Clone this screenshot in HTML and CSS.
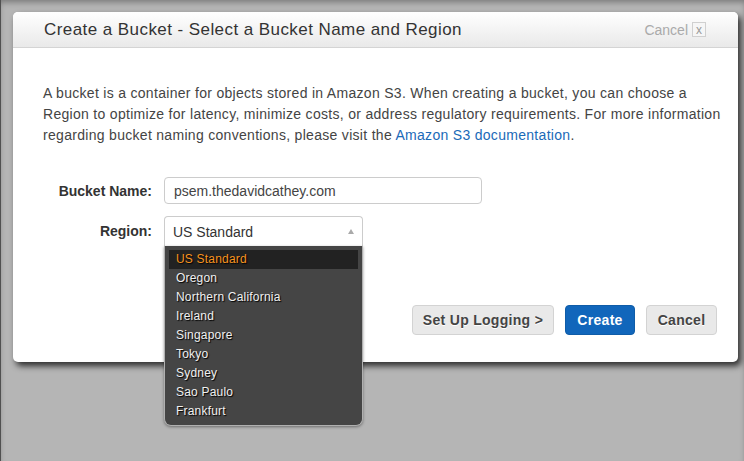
FILE: index.html
```html
<!DOCTYPE html>
<html>
<head>
<meta charset="utf-8">
<link rel="stylesheet" href="styles.css">
</head>
<body>
<div class="page">
  <div class="dialog">
    <div class="dialog-header">
      <h1 class="title">Create a Bucket - Select a Bucket Name and Region</h1>
      <div class="close">Cancel <span class="close-x">x</span></div>
    </div>
    <div class="dialog-body">
      <p class="intro">A bucket is a container for objects stored in Amazon S3. When creating a bucket, you can choose a Region to optimize for latency, minimize costs, or address regulatory requirements. For more information regarding bucket naming conventions, please visit the <a class="link" href="#">Amazon S3 documentation</a>.</p>
      <div class="form">
        <label class="label">Bucket Name:</label>
        <div class="input">psem.thedavidcathey.com</div>
        <label class="label">Region:</label>
        <div class="select-wrap">
          <div class="select">
            <span>US Standard</span>
            <span class="arrow"></span>
          </div>
          <ul class="menu">
            <li class="item active">US Standard</li>
            <li class="item">Oregon</li>
            <li class="item">Northern California</li>
            <li class="item">Ireland</li>
            <li class="item">Singapore</li>
            <li class="item">Tokyo</li>
            <li class="item">Sydney</li>
            <li class="item">Sao Paulo</li>
            <li class="item">Frankfurt</li>
          </ul>
        </div>
      </div>
      <div class="actions">
        <button class="btn btn-logging">Set Up Logging &gt;</button>
        <button class="btn btn-primary">Create</button>
        <button class="btn btn-cancel">Cancel</button>
      </div>
    </div>
  </div>
</div>
</body>
</html>
```
FILE: styles.css
```css
html, body {
  margin: 0;
  padding: 0;
}
body {
  background: #b5b5b5;
  font-family: "Liberation Sans", Arial, sans-serif;
  width: 744px;
  height: 461px;
  overflow: hidden;
}
.page {
  height: 461px;
  box-sizing: border-box;
  border-left: 1px solid #505050;
  padding: 12px 0 0 12px;
  box-shadow: inset 0 4px 6px -2px rgba(0,0,0,0.35);
}
.dialog {
  width: 725px;
  height: 350px;
  background: #fff;
  border-radius: 5px;
  box-shadow: 3px 4px 6px rgba(0,0,0,0.75);
}
.dialog-header {
  height: 35px;
  border-bottom: 1px solid #d4d4d4;
  border-radius: 5px 5px 0 0;
  background: linear-gradient(#ffffff, #e9e9e9);
  display: flex;
  align-items: center;
  justify-content: space-between;
  padding: 0 32px 0 31px;
}
.title {
  margin: 0;
  font-size: 17px;
  font-weight: normal;
  color: #333;
  letter-spacing: 0.43px;
}
.close {
  font-size: 14px;
  color: #aaa;
  display: flex;
  align-items: center;
  gap: 4px;
}
.close-x {
  display: inline-flex;
  align-items: center;
  justify-content: center;
  width: 12px;
  height: 13px;
  border: 1px solid #d0d0d0;
  font-size: 12px;
  color: #999;
  line-height: 1;
  background: #f6f6f6;
}
.dialog-body {
  padding: 0 21px 0 30px;
}
.intro {
  margin: 35px -15px 0 0;
  font-size: 14px;
  line-height: 21px;
  color: #444;
  letter-spacing: 0.3px;
}
.link {
  color: #1a6ab8;
  text-decoration: none;
}
.form {
  display: grid;
  grid-template-columns: 109px 318px;
  column-gap: 12px;
  row-gap: 12px;
  align-items: center;
  margin-top: 31px;
}
.label {
  text-align: right;
  font-size: 14px;
  font-weight: bold;
  color: #333;
}
.input {
  height: 25px;
  border: 1px solid #ccc;
  border-radius: 4px;
  font-size: 14px;
  color: #444;
  display: flex;
  align-items: center;
  padding-left: 9px;
}
.select-wrap {
  position: relative;
  width: 199px;
}
.select {
  height: 30px;
  box-sizing: border-box;
  border: 1px solid #ccc;
  border-bottom: none;
  border-radius: 4px 4px 0 0;
  font-size: 14px;
  color: #333;
  display: flex;
  align-items: center;
  justify-content: space-between;
  padding: 0 8px 0 8px;
}
.arrow {
  width: 0;
  height: 0;
  border-left: 3px solid transparent;
  border-right: 3px solid transparent;
  border-bottom: 5px solid #aaa;
}
.menu {
  position: absolute;
  top: 30px;
  left: 0;
  width: 199px;
  box-sizing: border-box;
  margin: 0;
  list-style: none;
  padding: 4px 4px 4px 4px;
  background: #454545;
  border: 1px solid #b0b0b0;
  border-top: none;
  border-radius: 0 0 7px 7px;
  height: 180px;
  box-shadow: 0 1px 3px rgba(0,0,0,0.4);
}
.item {
  height: 19px;
  line-height: 18px;
  font-size: 12px;
  color: #f0f0f0;
  padding-left: 7px;
  letter-spacing: 0.2px;
  text-shadow: 1px 1px 1px #000;
}
.item.active {
  background: #222;
  color: #f7931e;
}
.actions {
  display: flex;
  justify-content: flex-end;
  gap: 11px;
  margin-top: 59px;
}
.btn {
  height: 30px;
  font-family: "Liberation Sans", Arial, sans-serif;
  font-size: 14px;
  font-weight: bold;
  border-radius: 4px;
  border: 1px solid #d3d3d3;
  background: #e9e9e9;
  color: #444;
  letter-spacing: 0.3px;
  padding: 0;
  text-shadow: 0 1px 0 #fff;
}
.btn-logging { width: 142px; }
.btn-cancel { width: 71px; }
.btn-primary {
  width: 70px;
  background: #1166bb;
  border-color: #0f5ca8;
  color: #fff;
  text-shadow: none;
}
```
